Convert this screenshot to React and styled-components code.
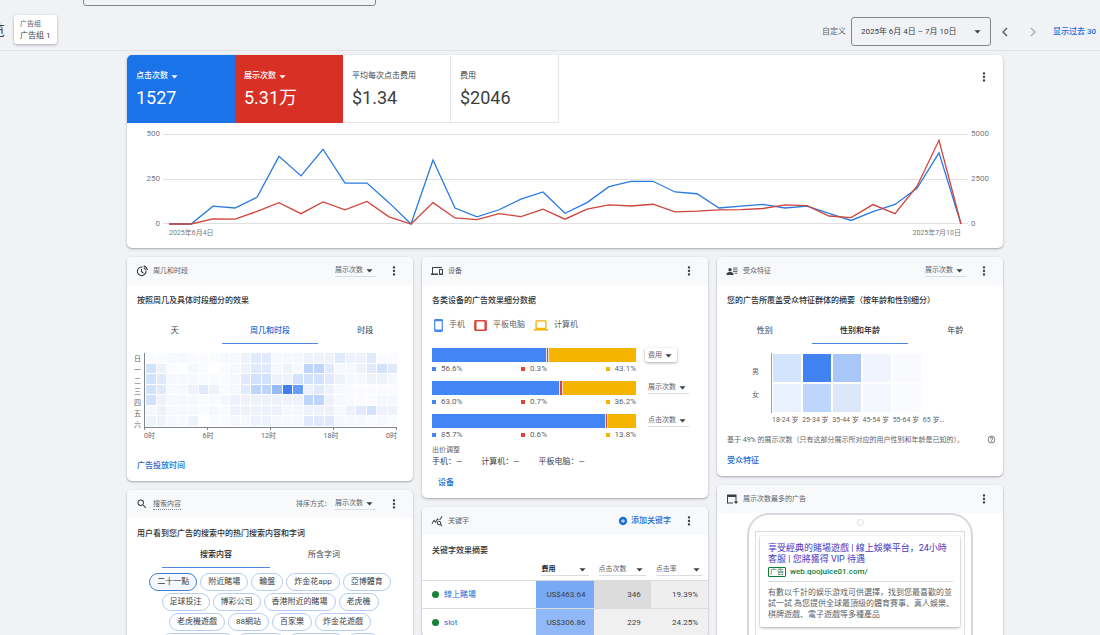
import React from 'react';
import styled, { createGlobalStyle, css } from 'styled-components';
import {
	MdAddCircle,
	MdArrowDropDown,
	MdChevronLeft,
	MdChevronRight,
	MdHelpOutline,
	MdMoreVert,
	MdOutlineDevices,
	MdQueryStats,
	MdSearch,
} from 'react-icons/md';

const COLORS = {
	blue: '#1a73e8',
	link: '#1a6dd4',
	red: '#d93025',
	barBlue: '#4285f4',
	barRed: '#db4437',
	barYellow: '#f4b400',
	text: '#3c4043',
	muted: '#5f6368',
	line: '#dadce0',
	page: '#f1f2f5',
};

const METRICS = ['点击次数', '展示次数', '费用', '点击率'];

const CLICKS = [
	0, 0, 100, 90, 150, 380, 270, 420, 230, 230, 120, 0, 360, 90, 40, 80, 140, 180, 60, 120, 210, 240, 240, 180, 170, 90,
	100, 110, 90, 100, 60, 20, 70, 110, 200, 400, 0,
];
const IMPRESSIONS = [
	0, 0, 290, 270, 710, 1200, 580, 1240, 800, 1270, 400, 0, 1200, 340, 250, 580, 410, 830, 270, 830, 1070, 1010, 1110,
	680, 720, 790, 810, 870, 1070, 1030, 450, 360, 1090, 580, 2120, 4700, 0,
];

// one digit per hour, 0 is the lightest and 9 the darkest
const WEEK = [
	['日', '112211122344222333433411'],
	['一', '531021012344232664223454'],
	['二', '542221112455335554322332'],
	['三', '542234312466798343211111'],
	['四', '532221123333333663211122'],
	['五', '232221213333322333234533'],
	['六', '332230112233222444222121'],
];
const HEAT = ['#ffffff', '#fafbff', '#f5f8fe', '#edf2fd', '#e1eafc', '#d2e1fc', '#bed4fb', '#98baf8', '#669df6', '#3f80f0'];

const AGES = ['18-24 岁', '25-34 岁', '35-44 岁', '45-54 岁', '55-64 岁', '65 岁…'];
const AUDIENCE = [
	['#d2e3fc', '#4182f1', '#a8c6f8', '#eff4fe', '#f8fafe', '#ffffff'],
	['#e9f0fe', '#bed5fc', '#dbe8fc', '#f4f8fe', '#f9fbfe', '#ffffff'],
];

const DEVICES = [
	{ metric: '费用', raised: true, values: [56.6, 0.3, 43.1] },
	{ metric: '展示次数', values: [63.0, 0.7, 36.2] },
	{ metric: '点击次数', values: [85.7, 0.6, 13.8] },
];
const DEVICE_COLORS = [COLORS.barBlue, COLORS.barRed, COLORS.barYellow];

const SEARCHES = [
	'二十一點', '附近賭場', '輪盤', '炸金花app', '亞博體育', '足球投注', '博彩公司', '香港附近的賭場', '老虎機',
	'老虎機遊戲', '88網站', '百家樂', '炸金花遊戲', '真人百家樂遊戲', '線上遊戲', '線上老虎機', '輪盤',
];

const KEYWORDS = [
	{ name: '線上賭場', cells: [['US$463.64', '#78a9f4'], ['346', '#dcdcdc'], ['19.39%', '#eeeeee']] },
	{ name: 'slot', cells: [['US$306.86', '#92b9f7'], ['229', '#f0f0f0'], ['24.25%', '#f0f0f0']] },
];

const linePoints = (values, max) => values.map((v, i) => `${6 + i * 22},${90 - (v / max) * 89}`).join(' ');

const MetricSelect = ({ value, options = METRICS, label = '指标', ...props }) => (
	<SelectWrap {...props}>
		<Select aria-label={label} defaultValue={value}>
			{(options.includes(value) ? options : [value, ...options]).map((option) => (
				<option key={option}>{option}</option>
			))}
		</Select>
		<Caret />
	</SelectWrap>
);

const CardHead = ({ icon, title, dotted, children }) => (
	<Head>
		<HeadIcon>{icon}</HeadIcon>
		<HeadTitle $dotted={dotted}>{title}</HeadTitle>
		{children}
		<MoreButton aria-label='更多'>
			<MdMoreVert />
		</MoreButton>
	</Head>
);

const TabBar = ({ items, initial, blue, inset }) => {
	const [active, setActive] = React.useState(initial);
	return (
		<Tabs role='tablist' $inset={inset}>
			{items.map((item) => (
				<Tab key={item} role='tab' aria-selected={item === active} $blue={blue} onClick={() => setActive(item)}>
					{item}
				</Tab>
			))}
		</Tabs>
	);
};

const ClockIcon = () => (
	<svg viewBox='0 0 24 24' fill='none' stroke='currentColor' strokeWidth='2.200'>
		<path d='M13 4.2A8.6 8.6 0 1 0 19.8 11' />
		<path d='M11 8v5.5l4 2.5' />
		<path d='M15.5 1.8a10 10 0 0 1 7 8.2M15.5 5.6a6.5 6.5 0 0 1 3.5 4' />
	</svg>
);

const AudienceIcon = () => (
	<svg viewBox='0 0 24 24' fill='currentColor'>
		<circle cx='8' cy='9.5' r='3.3' />
		<path d='M1 20v-2.2c0-2.6 4.5-3.8 7-3.8s7 1.2 7 3.8V20z' />
		<path d='M14 5h9v2h-9zM14 8.500h9v2h-9zM14 12h9v2h-9zM17 15.500h6v2h-6z' opacity='.75' />
	</svg>
);

const AdIcon = () => (
	<svg viewBox='0 0 24 24' fill='currentColor'>
		<path d='M2 3h19v11h-2V8H4v11h10v2H2z' />
		<path d='m20 13 1.500 3.500L25 18l-3.500 1.500L20 23l-1.500-3.500L15 18l3.500-1.500z' />
	</svg>
);

const PhoneIcon = () => (
	<svg width='9' height='13' viewBox='0 0 9 13' fill='none' stroke={COLORS.barBlue}>
		<rect x='.7' y='.7' width='7.600' height='11.600' rx='.8' strokeWidth='1.200' />
		<path d='M1 1.500h7M1 11.300h7' strokeWidth='1.600' />
	</svg>
);

const TabletIcon = () => (
	<svg width='13' height='11' viewBox='0 0 13 11' fill='none' stroke={COLORS.barRed}>
		<rect x='.8' y='.8' width='11.400' height='9.400' rx='.8' strokeWidth='1.400' />
		<path d='M1.800 1v9M11.200 1v9' strokeWidth='1.500' />
	</svg>
);

const LaptopIcon = () => (
	<svg width='14' height='11' viewBox='0 0 14 11' fill='none' stroke={COLORS.barYellow}>
		<rect x='2.100' y='.8' width='9.800' height='7.600' rx='.6' strokeWidth='1.300' />
		<path d='M0 9.700h14' strokeWidth='1.600' />
	</svg>
);

const Toolbar = () => (
	<TopBar>
		<SearchStrip>
			<SearchInput aria-label='搜索' />
		</SearchStrip>
		<ToolRow>
			<Crumbs>
				<PageTitle>
					<span>概览</span>
				</PageTitle>
				<GroupChip>
					<small>广告组</small>
					<span>广告组 1</span>
				</GroupChip>
			</Crumbs>
			<DateLabel id='range-label'>自定义</DateLabel>
			<DateButton aria-describedby='range-label'>
				2025年 6月 4日 – 7月 10日
				<Caret />
			</DateButton>
			<ArrowButton aria-label='上一段时间'>
				<MdChevronLeft />
			</ArrowButton>
			<ArrowButton aria-label='下一段时间' disabled>
				<MdChevronRight />
			</ArrowButton>
			<RangeLink href='#last-30'>显示过去 30</RangeLink>
		</ToolRow>
	</TopBar>
);

const SummaryCard = () => (
	<Card>
		<TileRow>
			<Tile $color={COLORS.blue}>
				<MetricSelect value='点击次数' $bare />
				<TileValue>1527</TileValue>
			</Tile>
			<Tile $color={COLORS.red}>
				<MetricSelect value='展示次数' $bare />
				<TileValue>5.31万</TileValue>
			</Tile>
			<Tile>
				<span>平均每次点击费用</span>
				<TileValue>$1.34</TileValue>
			</Tile>
			<Tile>
				<span>费用</span>
				<TileValue>$2046</TileValue>
			</Tile>
			<MoreButton aria-label='更多'>
				<MdMoreVert />
			</MoreButton>
		</TileRow>
		<ChartRow>
			<Axis $right>
				<span>500</span>
				<span>250</span>
				<span>0</span>
			</Axis>
			<Plot>
				<svg viewBox='0 0 805 92' preserveAspectRatio='none' fill='none'>
					<path d='M0 .5H805M0 45.500H805M0 89.500H805' stroke='#e0e0e0' vectorEffect='non-scaling-stroke' />
					<polyline points={linePoints(CLICKS, 500)} stroke='#2a7ae0' strokeWidth='1.300' />
					<polyline points={linePoints(IMPRESSIONS, 5000)} stroke='#d0443a' strokeWidth='1.300' />
				</svg>
				<Dates>
					<span>2025年6月4日</span>
					<span>2025年7月10日</span>
				</Dates>
			</Plot>
			<Axis>
				<span>5000</span>
				<span>2500</span>
				<span>0</span>
			</Axis>
		</ChartRow>
	</Card>
);

const WeekCard = () => (
	<Card>
		<CardHead icon={<ClockIcon />} title='周几和时段'>
			<MetricSelect value='展示次数' />
		</CardHead>
		<CardTitle>按照周几及具体时段细分的效果</CardTitle>
		<TabBar items={['天', '周几和时段', '时段']} initial='周几和时段' blue />
		<WeekChart>
			<DayLabels>
				{WEEK.map(([day]) => (
					<span key={day}>{day}</span>
				))}
			</DayLabels>
			<div>
				<WeekGrid>
					{WEEK.map(([day, hours]) => [...hours].map((level, i) => <HeatCell key={day + i} $color={HEAT[level]} />))}
				</WeekGrid>
				<Ticks>
					<i />
					<i />
					<i />
					<i />
					<i />
				</Ticks>
				<Hours>
					<span>0时</span>
					<span>6时</span>
					<span>12时</span>
					<span>18时</span>
					<span>0时</span>
				</Hours>
			</div>
		</WeekChart>
		<CardLink href='#schedule' $gap={18}>广告投放时间</CardLink>
	</Card>
);

const DeviceCard = () => (
	<Card>
		<CardHead icon={<MdOutlineDevices />} title='设备' />
		<CardTitle>各类设备的广告效果细分数据</CardTitle>
		<Legend>
			<span><PhoneIcon />手机</span>
			<span><TabletIcon />平板电脑</span>
			<span><LaptopIcon />计算机</span>
		</Legend>
		<Bars>
			{DEVICES.map(({ metric, raised, values }) => (
				<BarRow key={metric}>
					<div>
						<Stack>
							{values.map((value, i) => (
								<Segment key={i} $color={DEVICE_COLORS[i]} style={{ flexGrow: value }} />
							))}
						</Stack>
						<Shares>
							{values.map((value, i) => (
								<Share key={i} $color={DEVICE_COLORS[i]}>{value.toFixed(1)}%</Share>
							))}
						</Shares>
					</div>
					<BarSelect>
						<MetricSelect value={metric} $raised={raised} />
					</BarSelect>
				</BarRow>
			))}
		</Bars>
		<BidLabel>出价调整</BidLabel>
		<Bids>
			<span>手机：—</span>
			<span>计算机：—</span>
			<span>平板电脑：—</span>
		</Bids>
		<CardLink href='#devices' $gap={9} $indent>设备</CardLink>
	</Card>
);

const AudienceCard = () => (
	<Card>
		<CardHead icon={<AudienceIcon />} title='受众特征'>
			<MetricSelect value='展示次数' />
		</CardHead>
		<CardTitle>您的广告所覆盖受众特征群体的摘要（按年龄和性别细分）</CardTitle>
		<TabBar items={['性别', '性别和年龄', '年龄']} initial='性别和年龄' />
		<AudienceChart>
			<GenderLabels>
				<span>男</span>
				<span>女</span>
			</GenderLabels>
			<AudienceGrid>
				{AUDIENCE.flat().map((color, i) => (
					<HeatCell key={i} $color={color} />
				))}
			</AudienceGrid>
			<span />
			<AgeLabels>
				{AGES.map((age) => (
					<span key={age}>{age}</span>
				))}
			</AgeLabels>
		</AudienceChart>
		<Footnote>
			基于 49% 的展示次数（只有这部分展示所对应的用户性别和年龄是已知的）。
			<MdHelpOutline />
		</Footnote>
		<CardLink href='#audience' $gap={9}>受众特征</CardLink>
	</Card>
);

const SearchCard = () => {
	const [selected, setSelected] = React.useState(0);
	return (
		<Card>
			<CardHead icon={<MdSearch />} title='搜索内容' dotted>
				<SortLabel>排序方式：</SortLabel>
				<MetricSelect value='展示次数' label='排序方式' />
			</CardHead>
			<CardTitle>用户看到您广告的搜索中的热门搜索内容和字词</CardTitle>
			<TabBar items={['搜索内容', '所含字词']} initial='搜索内容' inset />
			<Chips>
				{SEARCHES.map((text, i) => (
					<Chip key={i} $active={i === selected} onClick={() => setSelected(i)}>
						{text}
					</Chip>
				))}
			</Chips>
		</Card>
	);
};

const KeywordCard = () => (
	<Card>
		<CardHead icon={<MdQueryStats />} title='关键字'>
			<AddLink href='#add-keyword'>
				<MdAddCircle />
				添加关键字
			</AddLink>
		</CardHead>
		<CardTitle>关键字效果摘要</CardTitle>
		<Table>
			<thead>
				<tr>
					<th aria-label='关键字' />
					<th><MetricSelect value='费用' $wide $strong /></th>
					<th><MetricSelect value='点击次数' $wide /></th>
					<th><MetricSelect value='点击率' $wide /></th>
				</tr>
			</thead>
			<tbody>
				{KEYWORDS.map(({ name, cells }) => (
					<tr key={name}>
						<td>
							<KeywordLink href='#keyword'>{name}</KeywordLink>
						</td>
						{cells.map(([value, color]) => (
							<ValueCell key={value} $color={color}>{value}</ValueCell>
						))}
					</tr>
				))}
			</tbody>
		</Table>
	</Card>
);

const AdCard = () => (
	<Card>
		<CardHead icon={<AdIcon />} title='展示次数最多的广告' />
		<TabletFrame>
			<Camera />
			<Screen>
				<Ad>
					<AdTitle href='#ad'>
						享受經典的賭場遊戲 | 線上娛樂平台，24小時
						<br />
						客服 | 您將獲得 VIP 待遇
					</AdTitle>
					<AdUrl>
						<b>广告</b>
						web.qoojuice01.com/
					</AdUrl>
					<AdText>
						有數以千計的娱乐游戏可供選擇，找到您最喜歡的並
						<br />
						試一試 為您提供全球最頂級的體育賽事、真人娛樂、
						<br />
						棋牌遊戲、電子遊戲等多種產品
					</AdText>
				</Ad>
			</Screen>
		</TabletFrame>
	</Card>
);

const App = () => (
	<Page>
		<GlobalStyle />
		<Toolbar />
		<Main>
			<SummaryCard />
			<Columns>
				<Column>
					<WeekCard />
					<SearchCard />
				</Column>
				<Column>
					<DeviceCard />
					<KeywordCard />
				</Column>
				<Column>
					<AudienceCard />
					<AdCard />
				</Column>
			</Columns>
		</Main>
	</Page>
);

var GlobalStyle = createGlobalStyle`
	*, *::before, *::after {
		box-sizing: border-box;
	}

	body {
		margin: 0;
		background: ${COLORS.page};
		color: ${COLORS.text};
		font: 8px/12px Roboto, 'Noto Sans CJK SC', sans-serif;
	}

	button, select, input {
		font: inherit;
		color: inherit;
		background: none;
		border: 0;
		padding: 0;
	}

	button, select {
		cursor: pointer;
	}

	a {
		color: ${COLORS.link};
		text-decoration: none;
	}

	svg {
		display: block;
	}
`;

var Page = styled.div`
	height: 100vh;
	overflow: hidden;
`;

var TopBar = styled.header`
	border-bottom: 1px solid #dfe1e5;
`;

var SearchStrip = styled.div`
	height: 6px;
	padding-left: 83px;
	display: flex;
	align-items: flex-end;
	overflow: hidden;
`;

var SearchInput = styled.input`
	flex: none;
	width: 293px;
	height: 32px;
	border: 1px solid #80868b;
	border-radius: 3px;
`;

var ToolRow = styled.div`
	height: 44px;
	padding: 7px 4px 0 0;
	display: flex;
	align-items: center;
	overflow: hidden;
	white-space: nowrap;
`;

var Crumbs = styled.div`
	display: flex;
	align-items: center;
	margin: 0 auto 4px 0;
`;

var PageTitle = styled.h1`
	width: 5px;
	margin: 0 9px 0 0;
	display: flex;
	justify-content: flex-end;
	overflow: hidden;
	font-size: 14px;
	line-height: 20px;
	font-weight: 400;
`;

var GroupChip = styled.button`
	display: flex;
	flex-direction: column;
	width: 43px;
	padding: 3px 6px 2px;
	border-radius: 3px;
	background: #fff;
	box-shadow: 0 1px 3px rgba(60, 64, 67, 0.4);
	text-align: left;

	small {
		font-size: 7px;
		color: ${COLORS.muted};
	}
`;

var DateLabel = styled.span`
	color: ${COLORS.muted};
	margin-right: 5px;
`;

var DateButton = styled.button`
	width: 140px;
	height: 29px;
	padding: 0 5px 0 9px;
	display: flex;
	align-items: center;
	justify-content: space-between;
	border: 1px solid #80868b;
	border-radius: 3px;
`;

var ArrowButton = styled.button`
	width: 28px;
	font-size: 18px;
	display: flex;
	justify-content: center;
	color: ${COLORS.muted};

	&:disabled {
		color: #b0b4b8;
	}
`;

var RangeLink = styled.a`
	margin-left: 6px;
	font-weight: 500;
`;

var Main = styled.main`
	padding: 4px 97px 0 127px;
	display: flex;
	flex-direction: column;
	gap: 9px;
`;

var Columns = styled.div`
	display: grid;
	grid-template-columns: repeat(3, minmax(0, 1fr));
	gap: 9px;
`;

var Column = styled.div`
	display: flex;
	flex-direction: column;
	gap: 9px;
`;

var Card = styled.section`
	background: #fff;
	border-radius: 5px;
	overflow: hidden;
	box-shadow: 0 1px 2px rgba(60, 64, 67, 0.3), 0 1px 3px rgba(60, 64, 67, 0.15);
`;

var Head = styled.header`
	height: 28px;
	padding: 0 12px 0 9px;
	display: flex;
	align-items: center;
	background: #f8f9fa;
	font-size: 7px;
	color: ${COLORS.muted};
`;

var HeadIcon = styled.span`
	width: 17px;
	font-size: 12px;
	color: ${COLORS.text};

	svg {
		width: 12px;
		height: 12px;
	}
`;

var HeadTitle = styled.h2`
	margin: 0 auto 0 0;
	font-size: 7px;
	line-height: 10px;
	font-weight: 400;
	border-bottom: ${(p) => (p.$dotted ? '1px dotted #80868b' : '0')};
`;

var MoreButton = styled.button`
	width: 16px;
	display: flex;
	justify-content: flex-end;
	margin-left: 9px;
	font-size: 14px;
	color: ${COLORS.text};
`;

var CardTitle = styled.h3`
	margin: 10px 10px 0;
	font-size: 8px;
	line-height: 12px;
	font-weight: 500;
	color: #2d3034;
	white-space: nowrap;
`;

var CardLink = styled.a`
	display: block;
	padding-top: 1px;
	margin: ${(p) => p.$gap}px 10px 9px ${(p) => (p.$indent ? 16 : 10)}px;
	font-weight: 500;
`;

var Caret = styled(MdArrowDropDown)`
	flex: none;
	width: 15px;
	height: 15px;
	pointer-events: none;
`;

var Select = styled.select`
	appearance: none;
	field-sizing: content;
	padding-right: 12px;
	outline: 0;

	option {
		color: ${COLORS.text};
		background: #fff;
	}
`;

var SelectWrap = styled.span`
	display: inline-flex;
	align-items: center;
	height: 12px;
	font-size: 7px;
	line-height: 11px;
	color: ${COLORS.muted};
	border-bottom: 1px solid ${COLORS.line};

	${Caret} {
		margin: 0 -1px 0 -13px;
		color: ${COLORS.text};
	}

	${(p) =>
		p.$bare &&
		css`
			border: 0;
			font-size: 8px;
			line-height: 12px;
			color: inherit;
			font-weight: 500;

			${Caret} {
				color: inherit;
			}
		`}

	${(p) =>
		p.$raised &&
		css`
			height: 14px;
			margin-left: -3px;
			padding: 0 2px 0 3px;
			border: 0;
			border-radius: 2px;
			box-shadow: 0 1px 3px rgba(60, 64, 67, 0.45);
		`}

	${(p) =>
		p.$wide &&
		css`
			display: flex;

			${Select} {
				flex: 1;
				min-width: 0;
			}
		`}

	${(p) =>
		p.$strong &&
		css`
			color: #202124;
			font-weight: 700;
		`}
`;

var TileRow = styled.div`
	display: flex;
	padding-right: 12px;

	${MoreButton} {
		margin: 15px 0 auto auto;
	}
`;

var Tile = styled.div`
	width: 108px;
	height: 68px;
	padding: 15px 9px 0;
	display: flex;
	flex-direction: column;
	align-items: flex-start;
	gap: 5px;

	${(p) =>
		p.$color
			? css`
					background: ${p.$color};
					color: #fff;
			  `
			: css`
					border: solid #e3e5e8;
					border-width: 0 1px 1px 0;
			  `}
`;

var TileValue = styled.strong`
	font-size: 18px;
	line-height: 22px;
	font-weight: 400;
`;

var ChartRow = styled.div`
	display: grid;
	grid-template-columns: 33px 1fr 32px;
	column-gap: 3px;
	padding: 6px 0 10px;
	font-size: 8px;
	line-height: 10px;
	color: #757a7f;
`;

var Axis = styled.div`
	height: 100px;
	display: flex;
	flex-direction: column;
	justify-content: space-between;
	text-align: ${(p) => (p.$right ? 'right' : 'left')};
`;

var Plot = styled.div`
	padding-top: 5px;

	svg {
		width: 100%;
		height: 92px;
	}
`;

var Dates = styled.div`
	display: flex;
	justify-content: space-between;
	padding: 2px 7px 0 6px;
	font-size: 7px;
`;

var Tabs = styled.div`
	display: flex;
	margin: ${(p) => (p.$inset ? '0 35px' : '9px 0 0')};
`;

var Tab = styled.button`
	flex: 1;
	height: 28px;
	padding-top: 2px;
	border-bottom: 1px solid transparent;
	font-size: 8px;

	&[aria-selected='true'] {
		border-color: #4a86dc;
		color: ${(p) => (p.$blue ? COLORS.link : '#202124')};
		font-weight: 500;
	}
`;

var HeatCell = styled.span`
	background: ${(p) => p.$color};
`;

var WeekChart = styled.div`
	display: grid;
	grid-template-columns: 7px 1fr;
	column-gap: 3px;
	margin: 9px 16px 0 7px;
	color: ${COLORS.muted};
`;

var DayLabels = styled.div`
	display: flex;
	flex-direction: column;
	height: 77px;
	padding-top: 1px;
	font-size: 7px;
	line-height: 11px;
`;

var WeekGrid = styled.div`
	display: grid;
	grid-template-columns: repeat(24, 1fr);
	grid-template-rows: repeat(7, 1fr);
	gap: 1px;
	height: 75px;
	padding: 0 0 1px 1px;
	border: solid #80868b;
	border-width: 0 0 1px 1px;
`;

var Ticks = styled.div`
	display: flex;
	justify-content: space-between;

	i {
		width: 1px;
		height: 2px;
		background: #80868b;
	}
`;

var Hours = styled.div`
	display: flex;
	justify-content: space-between;
	padding-top: 1px;
	font-size: 7px;
	line-height: 10px;
`;

var Legend = styled.div`
	display: flex;
	gap: 9px;
	margin: 11px 12px 0;
	color: ${COLORS.muted};

	span {
		display: flex;
		align-items: center;
		gap: 6px;
		height: 14px;
	}
`;

var Bars = styled.div`
	display: flex;
	flex-direction: column;
	gap: 7px;
	margin: 16px 10px 0;
`;

var BarRow = styled.div`
	display: grid;
	grid-template-columns: 1fr 50px;
	column-gap: 12px;
`;

var Stack = styled.div`
	display: flex;
	gap: 1px;
	height: 14px;
	background: #f6dfd0;
`;

var Segment = styled.span`
	flex: 0 1 0px;
	min-width: 1px;
	background: ${(p) => p.$color};
`;

var Shares = styled.div`
	display: flex;
	justify-content: space-between;
	margin-top: 2px;
	color: ${COLORS.muted};
	line-height: 10px;
`;

var Share = styled.span`
	display: flex;
	align-items: center;
	gap: 5px;

	&::before {
		content: '';
		width: 4px;
		height: 4px;
		background: ${(p) => p.$color};
	}
`;

var BarSelect = styled.div`
	display: flex;
	align-items: center;
	height: 14px;
`;

var BidLabel = styled.p`
	margin: 5px 10px 2px;
	font-size: 7px;
	line-height: 10px;
	color: ${COLORS.muted};
`;

var Bids = styled.div`
	display: flex;
	gap: 19px;
	margin: 0 10px;
	line-height: 10px;
`;

var AudienceChart = styled.div`
	display: grid;
	grid-template-columns: 7px 1fr;
	column-gap: 12px;
	margin: 9px 52px 0 35px;
	font-size: 7px;
	line-height: 10px;
	color: ${COLORS.muted};
`;

var GenderLabels = styled.div`
	display: flex;
	flex-direction: column;
	justify-content: center;
	gap: 13px;
`;

var AudienceGrid = styled.div`
	display: grid;
	grid-template-columns: repeat(6, minmax(0, 1fr));
	grid-template-rows: 28px 28px;
	gap: 2px;
	padding: 1px 0 1px 1px;
	border-left: 1px solid #9aa0a6;
`;

var AgeLabels = styled.div`
	display: grid;
	grid-template-columns: repeat(6, minmax(0, 1fr));
	column-gap: 2px;
	padding: 2px 0 0 1px;
	white-space: nowrap;
`;

var Footnote = styled.p`
	display: flex;
	justify-content: space-between;
	align-items: flex-start;
	margin: 10px 7px 0 10px;
	font-size: 7px;
	line-height: 10px;
	color: ${COLORS.muted};
	white-space: nowrap;

	svg {
		width: 9px;
		height: 9px;
	}
`;

var SortLabel = styled.span`
	margin-right: 4px;
`;

var Chips = styled.div`
	display: flex;
	flex-wrap: wrap;
	justify-content: center;
	gap: 2px 3px;
	margin: 5px 18px 0;
	padding-bottom: 10px;
`;

var Chip = styled.button`
	height: 18px;
	padding: 0 7px;
	border: 1px solid ${(p) => (p.$active ? '#3f7fdb' : '#b5cdf2')};
	border-radius: 9px;
	background: ${(p) => (p.$active ? '#f5f9ff' : '#fff')};
`;

var AddLink = styled.a`
	display: flex;
	align-items: center;
	gap: 3px;
	font-size: 8px;
	font-weight: 500;

	svg {
		width: 10px;
		height: 10px;
	}
`;

var Table = styled.table`
	width: 100%;
	table-layout: fixed;
	border-collapse: collapse;

	th {
		width: 20%;
		padding: 7px 5px 4px;
		font-weight: 400;
	}

	th:first-child {
		width: 40%;
	}

	td {
		height: 28px;
		padding: 0 10px;
		border-top: 1px solid ${COLORS.line};
	}
`;

var KeywordLink = styled.a`
	display: flex;
	align-items: center;
	gap: 5px;

	&::before {
		content: '';
		width: 7px;
		height: 7px;
		border-radius: 50%;
		background: #188038;
	}
`;

var ValueCell = styled.td`
	background: ${(p) => p.$color};
	text-align: right;
`;

var TabletFrame = styled.div`
	height: 200px;
	margin: 0 30px;
	padding: 4px 6px 0;
	display: flex;
	flex-direction: column;
	border: 2px solid #d5d8dc;
	border-bottom: 0;
	border-radius: 22px 22px 0 0;
`;

var Camera = styled.span`
	width: 7px;
	height: 7px;
	margin: 0 auto 5px;
	border: 1px solid ${COLORS.line};
	border-radius: 50%;
`;

var Screen = styled.div`
	flex: 1;
	padding: 4px;
	border: 1px solid ${COLORS.line};
`;

var Ad = styled.article`
	padding: 7px 7px 7px 8px;
	border-radius: 2px;
	box-shadow: 0 1px 3px rgba(60, 64, 67, 0.45);
	white-space: nowrap;
`;

var AdTitle = styled.a`
	display: block;
	color: #4a37c0;
	font-size: 9px;
	line-height: 11px;
`;

var AdUrl = styled.div`
	display: flex;
	align-items: center;
	gap: 4px;
	padding: 1px 0 3px;
	border-bottom: 1px solid ${COLORS.line};
	color: #0d7a3e;
	font-weight: 500;

	b {
		padding: 0 1px;
		border: 1px solid currentColor;
		border-radius: 1px;
		font-size: 7px;
		line-height: 8px;
		font-weight: 400;
	}
`;

var AdText = styled.p`
	margin: 5px 0 0;
	line-height: 11px;
	color: ${COLORS.muted};
`;

export default App;
